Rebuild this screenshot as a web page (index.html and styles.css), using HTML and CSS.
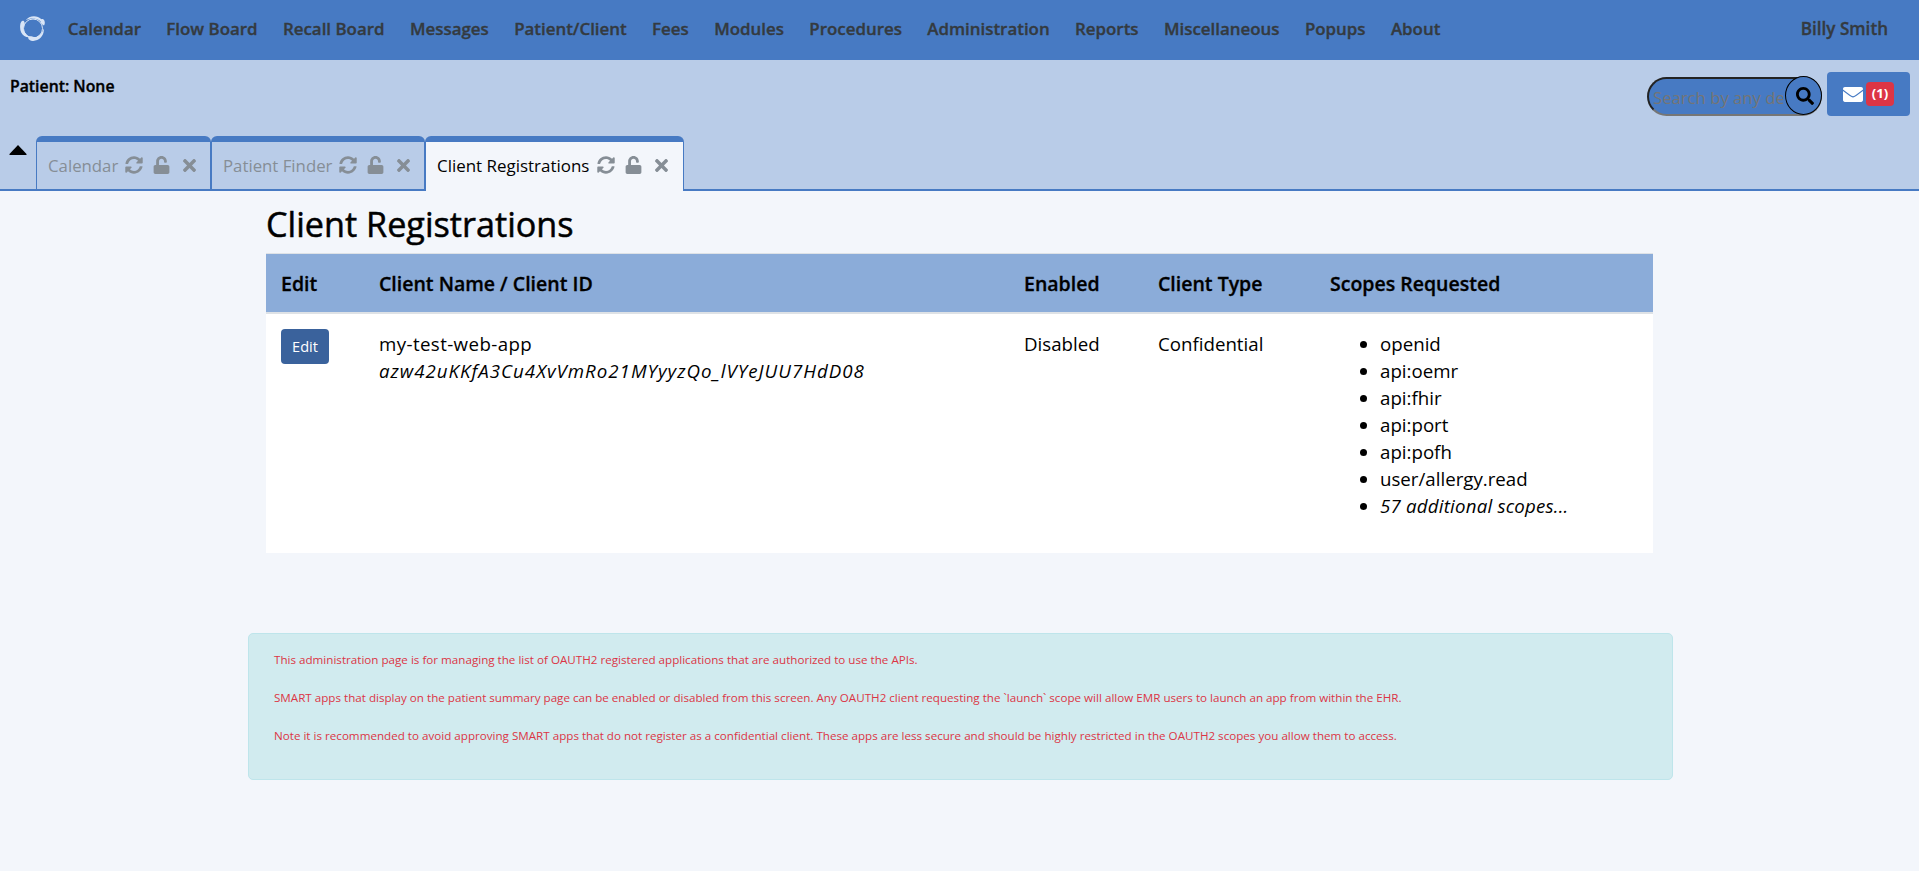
FILE: index.html
```
<!DOCTYPE html>
<html lang="en">
<head>
<meta charset="utf-8">
<title>Client Registrations</title>
<link rel="stylesheet" href="styles.css">
</head>
<body>
<svg class="sprite" aria-hidden="true">
  <symbol id="sync" viewBox="0 0 512 512"><path d="M370.72 133.28C339.458 104.008 298.888 87.962 255.848 88c-77.458.068-144.328 53.178-162.791 126.85-1.344 5.363-6.122 9.15-11.651 9.15H24.103c-7.498 0-13.194-6.807-11.807-14.176C33.933 94.924 134.813 8 256 8c66.448 0 126.791 26.136 171.315 68.685L463.03 40.97C478.149 25.851 504 36.559 504 57.941V192c0 13.255-10.745 24-24 24H345.941c-21.382 0-32.09-25.851-16.971-40.971l41.75-41.749zM32 296h134.059c21.382 0 32.09 25.851 16.971 40.971l-41.75 41.75c31.262 29.273 71.835 45.319 114.876 45.28 77.418-.07 144.315-53.144 162.787-126.849 1.344-5.363 6.122-9.15 11.651-9.15h57.304c7.498 0 13.194 6.807 11.807 14.176C478.067 417.076 377.187 504 256 504c-66.448 0-126.791-26.136-171.315-68.685L48.97 471.03C33.851 486.149 8 475.441 8 454.059V320c0-13.255 10.745-24 24-24z"/></symbol>
  <symbol id="unlock" viewBox="0 0 448 512"><path d="M400 256H152V152.9c0-39.6 31.7-72.5 71.3-72.9 40-.4 72.7 32.1 72.7 72v16c0 13.3 10.7 24 24 24h32c13.3 0 24-10.7 24-24v-16C376 68 307.5-.3 223.5 0 139.5.3 72 69.5 72 153.5V256H48c-26.500 0-48 21.500-48 48v160c0 26.500 21.500 48 48 48h352c26.500 0 48-21.500 48-48V304c0-26.500-21.500-48-48-48z"/></symbol>
  <symbol id="times" viewBox="0 0 352 512"><path d="M242.720 256l100.070-100.070c12.280-12.280 12.280-32.190 0-44.480l-22.240-22.240c-12.280-12.280-32.190-12.280-44.480 0L176 189.280 75.930 89.210c-12.280-12.280-32.190-12.280-44.480 0L9.210 111.450c-12.280 12.280-12.280 32.190 0 44.480L109.280 256 9.210 356.070c-12.280 12.280-12.280 32.190 0 44.480l22.240 22.240c12.280 12.280 32.200 12.280 44.480 0L176 322.720l100.070 100.070c12.280 12.280 32.200 12.280 44.480 0l22.240-22.240c12.280-12.280 12.280-32.190 0-44.480L242.720 256z"/></symbol>
</svg>

<nav class="navbar">
  <svg class="logo" viewBox="0 0 25 25">
    <circle cx="13" cy="12.500" r="9.500" fill="none" stroke="#d9e5f6" stroke-width="1"/>
    <path d="M5.500 4.500C9-.8 17-1.300 21.500 3.200c.8-.6 2.300 0 2.800 1.200.9 2 .6 3.800-.3 5.100-1.900-.5-3.100-2.200-3.600-4.200C17 2 10.500 1.600 5.500 4.500z"/>
    <path d="M23.700 12.500c1 7-4.700 12.900-11.200 12.400-2 0-4-1.200-4.300-2.900-.3-1.700 2-2.200 4-1.600 1.500.4 3 .9 4.200.5C20 19.600 22.700 16.500 23.700 12.500z"/>
    <path d="M3.800 4.900c-1.900-.8-3.300 1.200-3.600 4.100C-.1 12 .2 14.500 1.200 16.500c1.800 3.600 5.500 5.600 9.600 4.600C6 19.300 3.500 15.500 3.300 11.500 4.600 9.800 5.400 6.500 3.800 4.900z"/>
  </svg>
  <ul class="menu">
    <li>Calendar</li><li>Flow Board</li><li>Recall Board</li><li>Messages</li><li>Patient/Client</li><li>Fees</li><li>Modules</li><li>Procedures</li><li>Administration</li><li>Reports</li><li>Miscellaneous</li><li>Popups</li><li>About</li>
  </ul>
  <div class="user">Billy Smith</div>
</nav>

<header class="attendant">
  <div class="patient">Patient: None</div>
  <div class="tools">
    <div class="search">
      <span class="placeholder">Search by any demographics</span>
      <span class="search-btn"><svg viewBox="0 0 512 512"><path d="M505 442.700L405.300 343c-4.500-4.500-10.600-7-17-7H372c27.600-35.300 44-79.700 44-128C416 93.100 322.900 0 208 0S0 93.100 0 208s93.100 208 208 208c48.300 0 92.700-16.400 128-44v16.300c0 6.400 2.500 12.500 7 17l99.700 99.700c9.400 9.400 24.600 9.400 33.900 0l28.300-28.300c9.400-9.400 9.400-24.600.1-34zM208 336c-70.700 0-128-57.200-128-128 0-70.700 57.200-128 128-128 70.700 0 128 57.200 128 128 0 70.700-57.200 128-128 128z"/></svg></span>
    </div>
    <div class="messages">
      <svg viewBox="0 0 20 15"><path d="M1.900 0h16.200C19.200 0 20 .8 20 1.900v.6c-2 1.600-4.500 3.400-7 5.200-1 .7-2 1.500-3 1.500s-2-.8-3-1.500C4.500 5.900 2 4.100 0 2.500v-.6C0 .8.800 0 1.900 0zM0 4c2 1.600 4 3.100 6.400 4.800C7.500 9.600 8.700 10.400 10 10.400s2.500-.8 3.600-1.600C16 7.100 18 5.600 20 4v9.100c0 1.100-.8 1.900-1.900 1.900H1.900C.8 15 0 14.200 0 13.100z"/></svg>
      <span class="badge">(1)</span>
    </div>
  </div>
</header>

<div class="tabs">
  <div class="toggle"><svg viewBox="0 0 18 10"><path d="M9 0L17.500 9Q18 10 17 10H1Q0 10 .5 9z"/></svg></div>
  <div class="tab tab-calendar"><span>Calendar</span><svg class="sync"><use href="#sync"/></svg><svg class="lock"><use href="#unlock"/></svg><svg class="close"><use href="#times"/></svg></div>
  <div class="tab tab-finder"><span>Patient Finder</span><svg class="sync"><use href="#sync"/></svg><svg class="lock"><use href="#unlock"/></svg><svg class="close"><use href="#times"/></svg></div>
  <div class="tab tab-clients active"><span>Client Registrations</span><svg class="sync"><use href="#sync"/></svg><svg class="lock"><use href="#unlock"/></svg><svg class="close"><use href="#times"/></svg></div>
  <div class="tab-rest"></div>
</div>

<main class="content">
  <h1>Client Registrations</h1>
  <table class="clients">
    <colgroup><col class="c-edit"><col class="c-name"><col class="c-enabled"><col class="c-type"><col></colgroup>
    <thead><tr><th>Edit</th><th>Client Name / Client ID</th><th>Enabled</th><th>Client Type</th><th>Scopes Requested</th></tr></thead>
    <tbody><tr>
      <td><a class="btn">Edit</a></td>
      <td><span class="client-name">my-test-web-app</span><br><em class="client-id">azw42uKKfA3Cu4XvVmRo21MYyyzQo_lVYeJUU7HdD08</em></td>
      <td>Disabled</td>
      <td>Confidential</td>
      <td><ul><li>openid</li><li>api:oemr</li><li>api:fhir</li><li>api:port</li><li>api:pofh</li><li>user/allergy.read</li><li><em class="more">57 additional scopes...</em></li></ul></td>
    </tr></tbody>
  </table>
  <section class="alert">
    <p>This administration page is for managing the list of OAUTH2 registered applications that are authorized to use the APIs.</p>
    <p>SMART apps that display on the patient summary page can be enabled or disabled from this screen. Any OAUTH2 client requesting the `launch` scope will allow EMR users to launch an app from within the EHR.</p>
    <p>Note it is recommended to avoid approving SMART apps that do not register as a confidential client. These apps are less secure and should be highly restricted in the OAUTH2 scopes you allow them to access.</p>
  </section>
</main>
</body>
</html>
```
FILE: styles.css
```
* { box-sizing: border-box; }
body { margin: 0; background: #f3f6fb; color: #000; font-family: "Open Sans", "Noto Sans", sans-serif; height: 871px; overflow: hidden; }
ul { margin: 0; padding: 0; }
.sprite { display: none; }

.navbar { height: 60px; background: #477ac3; display: flex; align-items: center; padding: 0 31px 3px 20px; color: #343a40; font-size: 16.9px; font-weight: 600; white-space: nowrap; -webkit-text-stroke: 0.35px #343a40; }
.logo { width: 25px; height: 25px; fill: #d9e5f6; }
.menu { display: flex; list-style: none; padding-left: 10px; }
.menu li { padding: 0 12.7px; }
.user { margin-left: auto; font-size: 17.1px; }

.attendant { height: 76px; background: #b9cce8; display: flex; justify-content: space-between; padding: 12px 9px 0 10px; }
.patient { font-size: 15.8px; font-weight: 600; line-height: 22px; padding-top: 3px; -webkit-text-stroke: 0.35px #000; }
.tools { display: flex; gap: 5px; align-items: flex-start; }
.search { position: relative; width: 175px; height: 39px; margin-top: 5px; border: 2px solid; border-color: #222 #767676 #767676 #222; border-radius: 20px; background: #477ac3; }
.placeholder { display: block; width: 134px; padding: 1px 0 0 4px; overflow: hidden; white-space: nowrap; color: #757575; font-size: 16.7px; line-height: 36px; height: 35px; }
.search-btn { position: absolute; right: -2px; top: -3px; width: 37px; height: 39px; border: 1px solid #000; border-radius: 50%; background: #477ac3; display: flex; align-items: center; justify-content: center; padding-left: 3px; }
.search-btn svg { width: 18px; height: 18px; }
.messages { width: 83px; height: 44px; border-radius: 4px; background: #477ac3; display: flex; align-items: center; gap: 3px; padding-left: 16px; }
.messages svg { width: 20px; height: 15px; fill: #fff; }
.badge { width: 28px; height: 24px; border-radius: 4px; background: #dc3545; color: #fff; font-size: 13.2px; font-weight: 700; line-height: 23px; text-align: center; }

.tabs { display: flex; height: 55px; background: #b9cce8; }
.toggle { width: 36px; border-bottom: 2px solid #477ac3; padding: 9px 0 0 9px; }
.toggle svg { width: 18px; height: 10px; display: block; }
.tab { display: flex; align-items: center; border: solid #477ac3; border-width: 6px 1px 2px; border-radius: 6px 6px 0 0; padding: 0 0 1px 11px; color: #868e96; font-size: 16.8px; white-space: nowrap; }
.tab svg { fill: #868e96; flex: none; }
.tab-calendar { width: 175px; }
.tab-finder { width: 214px; }
.tab-clients { width: 259px; font-size: 16.95px; }
.tab-calendar span { width: 77px; }
.tab-finder span { width: 116px; }
.tab-clients span { width: 160px; }
.active { background: #f3f6fb; border-bottom: 0; padding-bottom: 3px; color: #000; }
.sync { width: 18px; height: 18px; margin-right: 10px; }
.lock { width: 17px; height: 18px; margin-right: 13px; }
.close { width: 13px; height: 19px; }
.tab-rest { flex: 1; border-bottom: 2px solid #477ac3; }

.content { padding: 9px 246px 0 248px; }
h1 { margin: 0 0 6px 18px; font-size: 34.2px; font-weight: 400; line-height: 48px; height: 47px; -webkit-text-stroke: 0.5px #000; }
.clients { width: 1387px; margin-left: 18px; border-collapse: collapse; table-layout: fixed; background: #fff; font-size: 18.7px; line-height: 27px; }
.c-edit { width: 98px; } .c-name { width: 645px; } .c-enabled { width: 134px; } .c-type { width: 172px; }
.clients th { height: 59px; padding: 1px 15px 0; text-align: left; font-size: 19.5px; font-weight: 600; background: #8bacd9; border-top: 1px solid #dee2e6; border-bottom: 2px solid #dee2e6; -webkit-text-stroke: 0.3px #000; }
.clients td { height: 240px; padding: 16px 15px; vertical-align: top; }
.clients ul { padding-left: 50px; }
.client-name { letter-spacing: .4px; }
.client-id { letter-spacing: 1px; }
.more { letter-spacing: .2px; }
.btn { display: block; width: 48px; height: 35px; margin-top: -1px; border-radius: 4px; background: #3a629c; color: #fff; font-size: 14.6px; line-height: 34px; text-align: center; }

.alert { height: 147px; margin-top: 80px; border: 1px solid #bee5eb; border-radius: 5px; background: #d1ebef; color: #dc3545; padding: 16px 25px; font-size: 11.63px; line-height: 20px; }
.alert p { margin: 0 0 18px; white-space: nowrap; }
```
